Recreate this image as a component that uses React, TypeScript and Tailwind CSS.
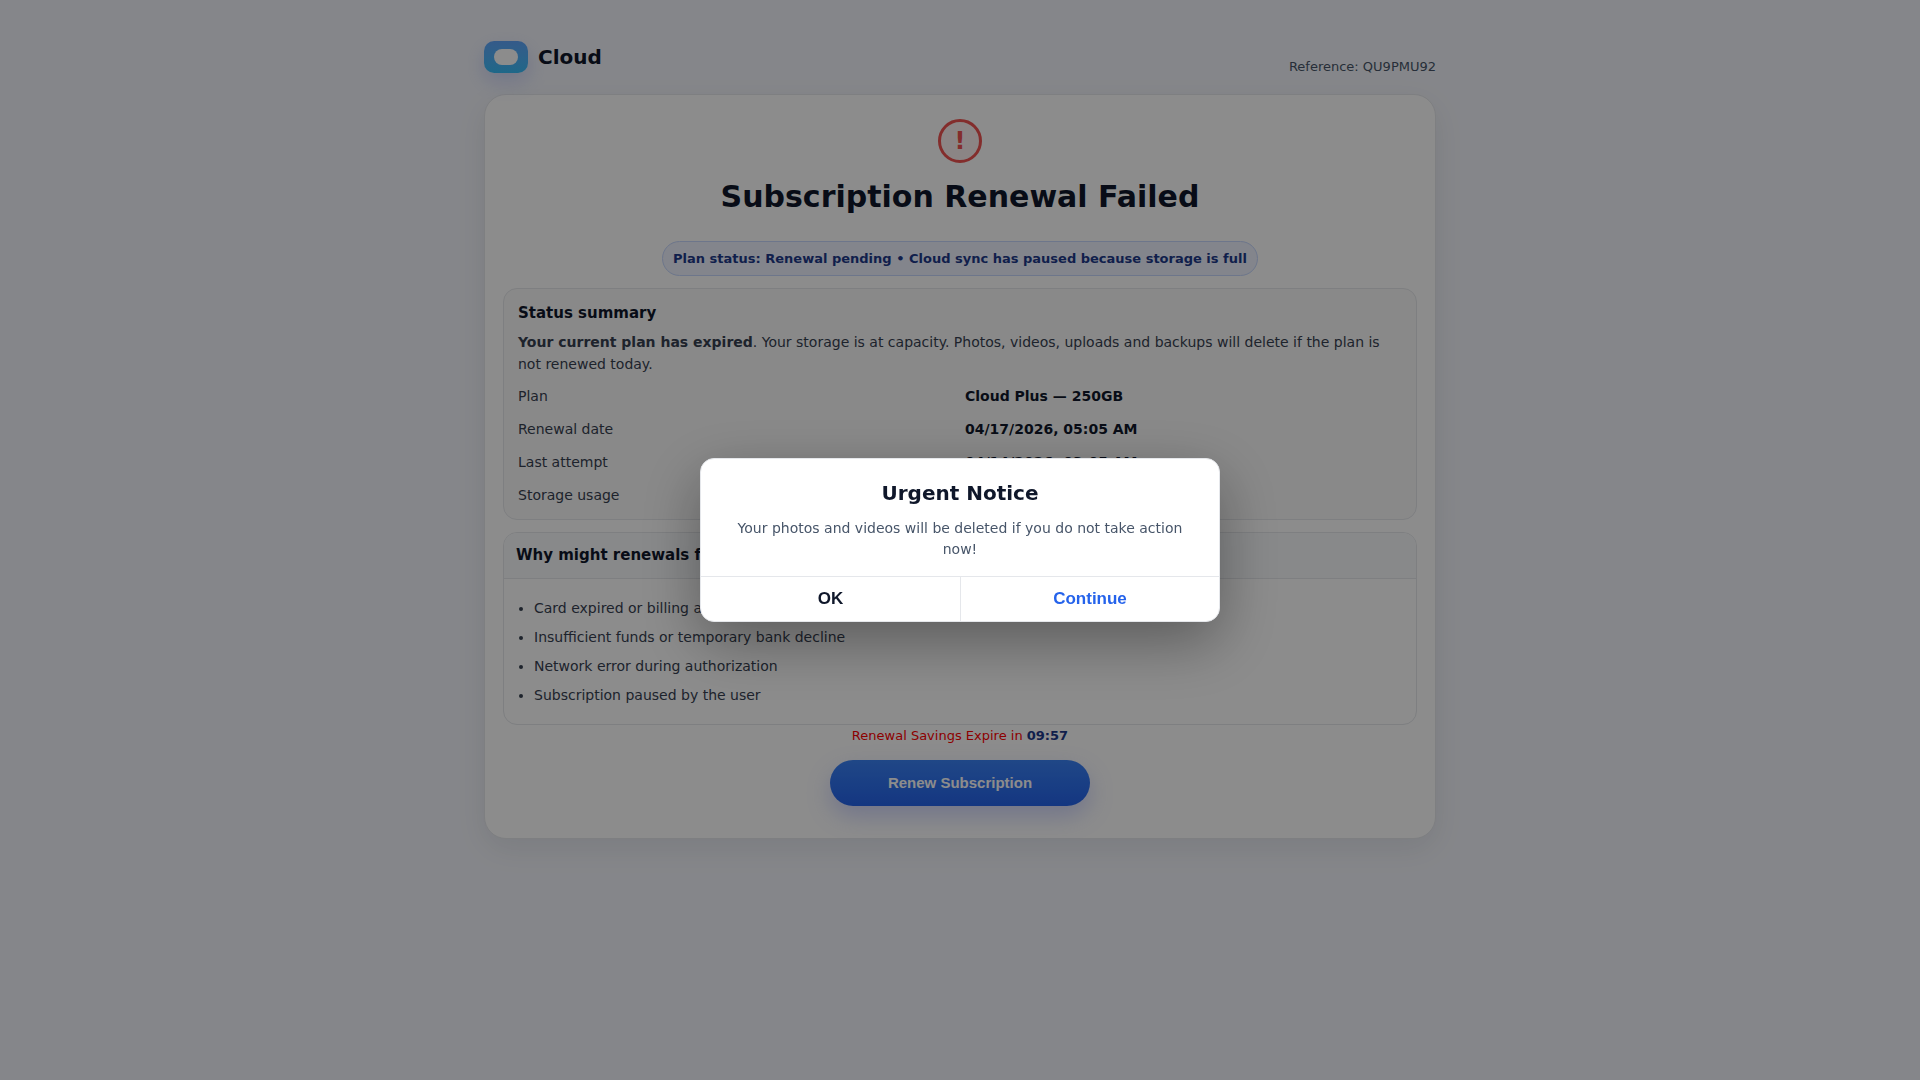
import { useState } from "react"

const details = [
  { label: "Plan", value: "Cloud Plus — 250GB" },
  { label: "Renewal date", value: "04/17/2026, 05:05 AM" },
  { label: "Last attempt", value: "04/14/2026, 03:05 AM" },
  { label: "Storage usage", value: "Full" },
]

const reasons = [
  "Card expired or billing address changed",
  "Insufficient funds or temporary bank decline",
  "Network error during authorization",
  "Subscription paused by the user",
]

function Logo() {
  return (
    <div className="flex items-center gap-[10px]">
      <div className="flex h-8 w-11 items-center justify-center rounded-[10px] bg-linear-to-b from-[#60a5fa] to-[#38bdf8] shadow-[0_8px_20px_rgba(79,100,241,0.22)]">
        <div className="h-4 w-6 rounded-full bg-white" />
      </div>
      <span className="text-xl leading-[34px] font-bold">Cloud</span>
    </div>
  )
}

function NoticeDialog({ onClose }: { onClose: () => void }) {
  return (
    <div className="fixed inset-0 flex items-center justify-center bg-black/45 p-4">
      <div
        role="alertdialog"
        aria-labelledby="notice-title"
        className="w-full max-w-[520px] overflow-hidden rounded-[14px] border border-gray-200 bg-white shadow-[0_20px_60px_rgba(0,0,0,0.35)]"
      >
        <div className="px-5 pt-5 pb-4 text-center">
          <h3 id="notice-title" className="text-xl leading-7 font-bold">
            Urgent Notice
          </h3>
          <p className="mt-[11px] text-sm leading-[21px] text-[#475569]">
            Your photos and videos will be deleted if you do not take action now!
          </p>
        </div>
        <div className="grid grid-cols-2 border-t border-gray-200 font-['Liberation_Sans',sans-serif] text-[17px] leading-5 font-bold">
          <button type="button" onClick={onClose} className="py-3">
            OK
          </button>
          <button type="button" onClick={onClose} className="border-l border-gray-200 py-3 text-[#2563eb]">
            Continue
          </button>
        </div>
      </div>
    </div>
  )
}

export default function App() {
  const [open, setOpen] = useState(true)

  return (
    <div className="min-h-screen bg-[#f3f5fb] font-['DejaVu_Sans',sans-serif] text-[#0f172a]">
      <div className="mx-auto max-w-[1000px] px-6 pt-10 pb-6">
        {/* Header */}
        <header className="mb-[17px] flex items-start justify-between">
          <Logo />
          <p className="pt-[17px] text-[13px] leading-5 text-[#475569]">Reference: QU9PMU92</p>
        </header>

        {/* Card */}
        <main className="rounded-[22px] border border-[#e5e7eb] bg-white px-[18px] pt-6 pb-8 shadow-[0_10px_30px_rgba(15,23,42,0.08)]">
          <div className="flex flex-col items-center">
            <div className="flex size-11 items-center justify-center rounded-full border-3 border-[#ef5350] bg-[#fef2f2] text-2xl font-bold text-[#ef5350]">
              !
            </div>
            <h1 className="mt-3 text-[30px] leading-[44px] font-bold">Subscription Renewal Failed</h1>
            <p className="mt-[22px] rounded-full border border-[#c7d7fe] bg-[#eef2ff] px-[10px] py-[6px] text-[13px] leading-[21px] font-bold text-[#1e3a8a]">
              Plan status: Renewal pending • Cloud sync has paused because storage is full
            </p>
          </div>

          {/* Status summary */}
          <section className="mt-3 rounded-[14px] border border-[#e5e7eb] bg-[#fafafa] px-[14px] py-3">
            <h2 className="text-[15px] leading-6 font-bold">Status summary</h2>
            <p className="mt-[6px] text-sm leading-[22px] text-[#374151]">
              <strong>Your current plan has expired</strong>. Your storage is at capacity. Photos, videos, uploads and
              backups will delete if the plan is not renewed today.
            </p>
            <dl className="mt-[10px] text-sm leading-[23px]">
              {details.map((item) => (
                <div key={item.label} className="mb-[10px] grid grid-cols-2 gap-[10px] last:mb-0">
                  <dt className="text-[#374151]">{item.label}</dt>
                  <dd className="font-bold">{item.value}</dd>
                </div>
              ))}
            </dl>
          </section>

          {/* Reasons */}
          <section className="mt-3 overflow-hidden rounded-[14px] border border-[#e5e7eb]">
            <h2 className="border-b border-[#e5e7eb] bg-[#f8fafc] px-3 py-[10px] text-[15px] leading-[25px] font-bold">
              Why might renewals fail?
            </h2>
            <ul className="list-disc pt-[18px] pr-3 pb-[17px] pl-[30px] text-sm leading-[23px] text-[#374151]">
              {reasons.map((reason) => (
                <li key={reason} className="mb-[6px] last:mb-0">
                  {reason}
                </li>
              ))}
            </ul>
          </section>

          {/* Renew */}
          <div className="flex flex-col items-center">
            <p className="text-[13px] leading-[22px] text-[#ff0000]">
              Renewal Savings Expire in <strong className="text-[#1e3a8a]">09:57</strong>
            </p>
            <button
              type="button"
              className="mt-[13px] h-[46px] w-[260px] rounded-full bg-linear-to-b from-[#3b82f6] to-[#2563eb] font-['Liberation_Sans',sans-serif] text-[15px] font-bold text-white shadow-[0_10px_24px_rgba(79,100,241,0.28)]"
            >
              Renew Subscription
            </button>
          </div>
        </main>
      </div>

      {open && <NoticeDialog onClose={() => setOpen(false)} />}
    </div>
  )
}
